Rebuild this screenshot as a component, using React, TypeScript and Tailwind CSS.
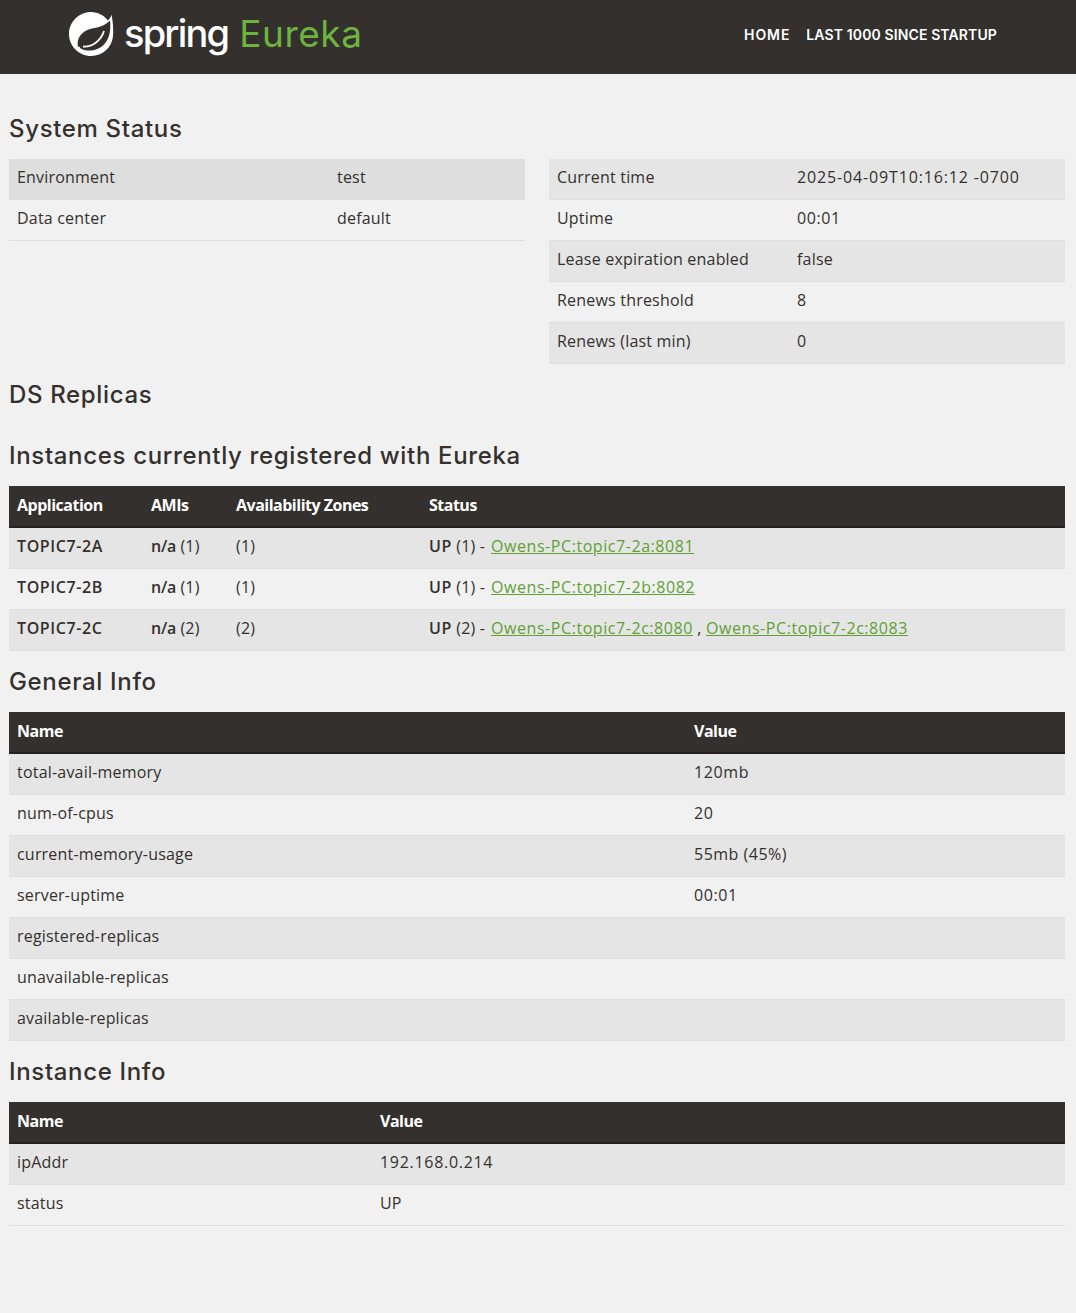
import React from 'react';

const sans = "font-['Open_Sans','Liberation_Sans',sans-serif]";

function Leaf() {
  return (
    <svg width="48" height="48" viewBox="0 0 48 48" className="shrink-0">
      <path
        fill="#fff"
        d="M44.5 4.5C44 7 42.5 8.5 41 10.5 37 5.5 31 2 24 2 12 2 2 12 2 24s10 22 22 22c11.500 0 21-8.500 22-20 .6-7-.2-15-1.500-21.500z"
      />
      <path
        fill="#34302d"
        d="M11 37.500C9 28 15 20.500 25 18.500c7-1.300 13-3 18-8 .8 7.500.5 16.500-5.500 23.500C31 41.500 19 42 14 38.500c-1-.6-2-.8-3-1z"
      />
      <path fill="none" stroke="#fff" strokeWidth="1.800" d="M16 36.500c9 1 18-6 21-15.500" />
      <circle cx="11.500" cy="38" r="1.600" fill="#fff" />
    </svg>
  );
}

function Row({ cells, odd, hover }: { cells: React.ReactNode[]; odd: boolean; hover?: boolean }) {
  return (
    <tr className={hover ? 'bg-[#dedede]' : odd ? 'bg-[#e5e5e5]' : ''}>
      {cells.map((c, i) => (
        <td key={i} className="h-[41px] border-b border-[#dddddd] px-2 pb-[5px] align-middle tracking-[0.2px]">{c}</td>
      ))}
    </tr>
  );
}

function Head({ cols }: { cols: { label: string; w?: string }[] }) {
  return (
    <thead>
      <tr className="bg-[#34302d] text-white">
        {cols.map(c => (
          <th key={c.label} className={`h-[42px] border-b-2 border-[#242120] px-2 pb-[3px] text-left font-bold align-middle tracking-[-0.5px] ${c.w ?? ''}`}>{c.label}</th>
        ))}
      </tr>
    </thead>
  );
}

function Title({ children }: { children: React.ReactNode }) {
  return (
    <h2 className="pt-[18px] pb-[17px] text-[24px] leading-[26px] font-medium tracking-[0.66px] text-[#34302d] font-['Inter',sans-serif]">
      {children}
    </h2>
  );
}

function Link({ children, first }: { children: React.ReactNode; first?: boolean }) {
  return <a className={`text-[#5fa134] underline tracking-[0.56px] ${first ? 'ml-[1.5px]' : ''}`}>{children}</a>;
}

const b = (s: string, t = 'tracking-[0.6px]') => <b className={`font-semibold ${t}`}>{s}</b>;
const n = (s: string, t = 'tracking-[0.6px]') => <span className={t}>{s}</span>;
const na = (c: string) => <>{b('n/a', 'tracking-[-0.2px]')} {c}</>;

export default function App() {
  const general: [string, React.ReactNode][] = [
    ['total-avail-memory', n('120mb')],
    ['num-of-cpus', n('20')],
    ['current-memory-usage', n('55mb (45%)', 'tracking-[0.5px]')],
    ['server-uptime', n('00:01')],
    ['registered-replicas', ''],
    ['unavailable-replicas', ''],
    ['available-replicas', ''],
  ];
  const right: [string, React.ReactNode][] = [
    ['Current time', n('2025-04-09T10:16:12 -0700', 'tracking-[0.85px]')],
    ['Uptime', n('00:01')],
    ['Lease expiration enabled', 'false'],
    ['Renews threshold', '8'],
    ['Renews (last min)', '0'],
  ];

  return (
    <div className={`min-h-[1313px] bg-[#f1f1f1] text-[16px] text-[#34302d] ${sans}`}>
      <nav className="flex h-[74px] items-center justify-between bg-[#34302d] pb-[6px] pl-[67px] pr-[79px]">
        <div className="flex items-center">
          <Leaf />
          <span className="ml-[9px] mb-[2px] text-[38px] leading-none font-medium tracking-[-1.8px] text-white font-['Inter',sans-serif]">spring</span>
          <span className="ml-[11px] mb-[2px] text-[37px] leading-none tracking-[0.5px] text-[#6db33f] font-['Inter',sans-serif]">Eureka</span>
        </div>
        <div className="flex gap-4 text-[14px] font-semibold text-white font-['Inter',sans-serif]">
          <span className="tracking-[0.9px]">HOME</span>
          <span className="tracking-[0.12px]">LAST 1000 SINCE STARTUP</span>
        </div>
      </nav>

      <main className="pl-[9px] pr-[11px] pt-[24px]">
        <Title>System Status</Title>
        <div className="flex items-start gap-6">
          <table className="w-[516px] table-fixed border-separate border-spacing-0">
            <colgroup><col className="w-[320px]" /><col /></colgroup>
            <tbody>
              <Row cells={['Environment', 'test']} odd hover />
              <Row cells={['Data center', 'default']} odd={false} />
            </tbody>
          </table>
          <table className="w-[516px] table-fixed border-separate border-spacing-0">
            <colgroup><col className="w-[240px]" /><col /></colgroup>
            <tbody>
              {right.map((r, i) => <Row key={r[0]} cells={r} odd={i % 2 === 0} />)}
            </tbody>
          </table>
        </div>

        <Title>DS Replicas</Title>
        <Title>Instances currently registered with Eureka</Title>
        <table className="w-full table-fixed border-separate border-spacing-0">
          <Head cols={[{ label: 'Application', w: 'w-[134px]' }, { label: 'AMIs', w: 'w-[85px]' }, { label: 'Availability Zones', w: 'w-[193px]' }, { label: 'Status' }]} />
          <tbody>
            <Row odd cells={[b('TOPIC7-2A'), na('(1)'), '(1)', <>{b('UP')} (1) - <Link first>Owens-PC:topic7-2a:8081</Link></>]} />
            <Row odd={false} cells={[b('TOPIC7-2B'), na('(1)'), '(1)', <>{b('UP')} (1) - <Link first>Owens-PC:topic7-2b:8082</Link></>]} />
            <Row odd cells={[b('TOPIC7-2C'), na('(2)'), '(2)', <>{b('UP')} (2) - <Link first>Owens-PC:topic7-2c:8080</Link> , <Link>Owens-PC:topic7-2c:8083</Link></>]} />
          </tbody>
        </table>

        <Title>General Info</Title>
        <table className="w-full table-fixed border-separate border-spacing-0">
          <Head cols={[{ label: 'Name', w: 'w-[677px]' }, { label: 'Value' }]} />
          <tbody>
            {general.map((r, i) => <Row key={r[0]} cells={r} odd={i % 2 === 0} />)}
          </tbody>
        </table>

        <Title>Instance Info</Title>
        <table className="w-full table-fixed border-separate border-spacing-0">
          <Head cols={[{ label: 'Name', w: 'w-[363px]' }, { label: 'Value' }]} />
          <tbody>
            <Row odd cells={['ipAddr', n('192.168.0.214', 'tracking-[0.7px]')]} />
            <Row odd={false} cells={['status', 'UP']} />
          </tbody>
        </table>
      </main>
    </div>
  );
}
